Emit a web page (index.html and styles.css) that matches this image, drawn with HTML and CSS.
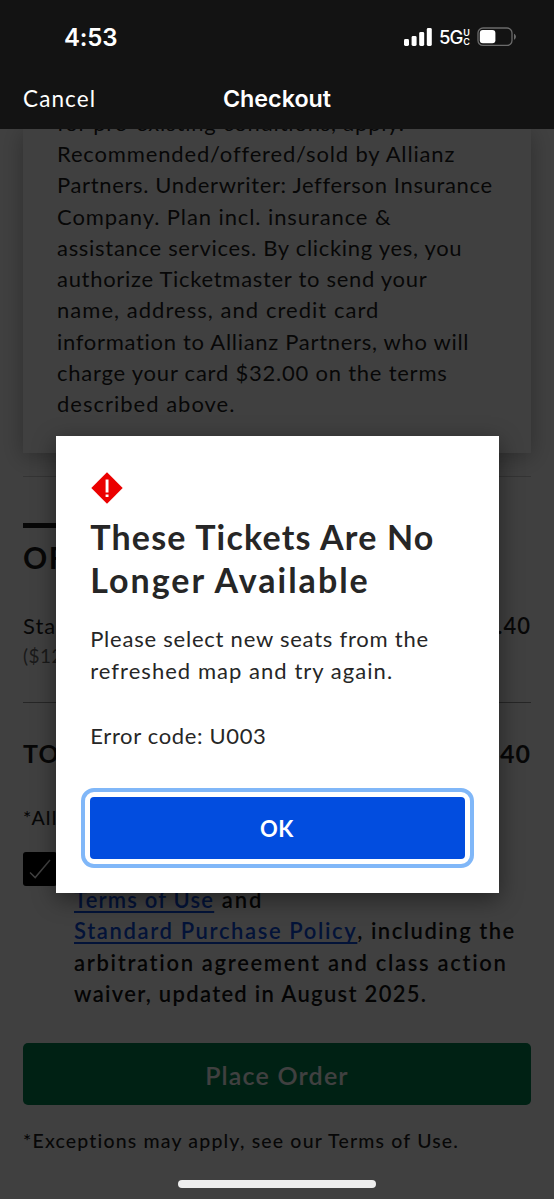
FILE: index.html
```html
<!DOCTYPE html>
<html lang="en">
<head>
<meta charset="utf-8">
<title>Checkout</title>
<link rel="stylesheet" href="styles.css">
</head>
<body>
<div class="screen">
  <header class="top">
    <div class="status">
      <span class="clock">4:53</span>
      <div class="indicators">
        <svg class="signal" width="28" height="18" viewBox="0 0 28 18"><g fill="#fff"><rect x="0" y="11" width="5" height="7" rx="1.4"/><rect x="7.6" y="8" width="5" height="10" rx="1.4"/><rect x="15.2" y="4" width="5" height="14" rx="1.4"/><rect x="22.8" y="0" width="5" height="18" rx="1.4"/></g></svg>
        <span class="net">5G</span>
        <span class="uc"><span>U</span><span>C</span></span>
        <svg class="battery" width="40" height="20" viewBox="0 0 40 20"><rect x="1" y="1" width="34" height="17.4" rx="5" fill="none" stroke="#6b6b6b" stroke-width="1.3"/><rect x="2.8" y="3" width="15.6" height="13.2" rx="3" fill="#fff"/><path d="M37 6.7v6c1.2-.5 1.9-1.6 1.9-3s-.7-2.500-1.900-3z" fill="#6b6b6b"/></svg>
      </div>
    </div>
    <nav class="nav"><span class="cancel">Cancel</span><span class="nav-title">Checkout</span></nav>
  </header>
  <main class="page">
    <section class="insurance">
      <p class="line ls-80">for pre-existing conditions, apply.</p>
      <p class="line ls-84">Recommended/offered/sold by Allianz</p>
      <p class="line ls-65">Partners. Underwriter: Jefferson Insurance</p>
      <p class="line ls-90">Company. Plan incl. insurance &amp;</p>
      <p class="line ls-70">assistance services. By clicking yes, you</p>
      <p class="line ls-70">authorize Ticketmaster to send your</p>
      <p class="line ls-104">name, address, and credit card</p>
      <p class="line ls-70">information to Allianz Partners, who will</p>
      <p class="line ls-77">charge your card $32.00 on the terms</p>
      <p class="line ls-100">described above.</p>
    </section>
    <section class="order">
      <div class="bar"></div>
      <h2 class="order-title">OR</h2>
      <div class="row item"><span>Sta</span><span class="amount">.40</span></div>
      <div class="fee">($12</div>
      <div class="row total"><span>TO</span><span>.40</span></div>
      <div class="note">*All</div>
      <div class="terms">
        <span class="check"><svg width="34" height="34" viewBox="0 0 34 34"><path d="M7 20.500l5.200 5.100L27 8" fill="none" stroke="#fff" stroke-width="1.500"/></svg></span>
        <div class="terms-text">
          <p><a class="ls-120">Terms of Use</a><span class="ls-200"> and</span></p>
          <p><a class="ls-160">Standard Purchase Policy</a><span class="ls-150">, including the</span></p>
          <p class="ls-167">arbitration agreement and class action</p>
          <p class="ls-130">waiver, updated in August 2025.</p>
        </div>
      </div>
      <div class="place">Place Order</div>
      <div class="exceptions">*Exceptions may apply, see our Terms of Use.</div>
    </section>
  </main>
  <div class="overlay">
    <div class="modal" role="dialog">
      <svg class="alert" width="32" height="32" viewBox="0 0 32 32"><path d="M16 .3L31.700 16 16 31.700.3 16z" fill="#eb0000"/><path d="M14.600 7.500h2.900v13h-2.900zM14.600 22.500h2.900v2.600h-2.900z" fill="#fff"/></svg>
      <h1 class="title"><span class="ls-120">These Tickets Are No</span><span class="ls-200">Longer Available</span></h1>
      <p class="message"><span class="ls-77">Please select new seats from the</span><span class="ls-104">refreshed map and try again.</span></p>
      <p class="message code ls-65">Error code: U003</p>
      <button class="ok">OK</button>
    </div>
  </div>
  <div class="home"></div>
</div>
</body>
</html>
```
FILE: styles.css
```css
* { box-sizing: border-box; }
body { margin: 0; font-family: Lato, sans-serif; }
h1, h2, p { margin: 0; font-weight: inherit; }

.screen { position: relative; width: 554px; height: 1199px; overflow: hidden; background: #fff; color: #1f1f1f; }

.top { position: relative; z-index: 3; height: 129px; background: #131313; color: #fff; }
.status { display: flex; justify-content: space-between; align-items: center; height: 74px; padding: 0 37px 0 64px; }
.clock { font: 600 24px Inter, sans-serif; letter-spacing: -0.2px; }
.indicators { display: flex; align-items: center; }
.net { margin-left: 7px; font: 500 18.500px Inter, sans-serif; letter-spacing: -1px; }
.uc { display: flex; flex-direction: column; margin: 0 7px 0 1px; font: 600 9px/9px Inter, sans-serif; }
.nav { display: grid; grid-template-columns: 1fr auto 1fr; align-items: center; height: 49px; padding: 0 23px; }
.cancel { font-size: 22.500px; letter-spacing: 1.100px; }
.nav-title { font: 600 23.300px Inter, sans-serif; }

.page { display: flex; flex-direction: column; height: 1070px; }
.insurance { height: 324px; margin: 0 23px; padding: 0 0 0 34px; box-shadow: 0 4px 22px rgba(0, 0, 0, .3); }
.line { height: 31.300px; font-size: 22px; line-height: 31.300px; white-space: nowrap; }
.insurance .line:first-child { margin-top: -22.300px; }

.order { display: flex; flex-direction: column; margin: 23px 23px 0; border-top: 1px solid #d0d0d0; }
.bar { width: 100px; height: 5px; margin-top: 46px; background: #1f1f1f; }
.order-title { height: 82px; padding-top: 4px; font-size: 30px; font-weight: 700; line-height: 50px; letter-spacing: 1.500px; }
.row { display: flex; justify-content: space-between; font-size: 22px; line-height: 32px; letter-spacing: 1px; }
.amount { font-weight: 600; }
.fee { height: 61px; font-size: 19px; line-height: 28px; letter-spacing: .5px; color: #6a6a6a; border-bottom: 1px solid #999; }
.total { height: 100px; padding-top: 34px; font-size: 25px; font-weight: 700; }
.note { height: 49px; font-size: 19.500px; font-weight: 500; line-height: 29px; letter-spacing: 1.200px; }
.terms { display: flex; gap: 17px; height: 191px; }
.check { width: 34px; height: 34px; border-radius: 3px; background: #000; }
.terms-text { padding-top: 32px; font-size: 22px; font-weight: 600; line-height: 31.300px; white-space: nowrap; color: #131313; }
.terms-text a { color: #0d4ddf; text-decoration: underline; text-decoration-thickness: 2px; text-underline-offset: 3px; }
.place { height: 62px; border-radius: 5px; background: #008450; color: #fff; text-align: center; font-size: 25px; font-weight: 600; line-height: 65px; letter-spacing: 1.200px; }
.exceptions { margin-top: 20px; font-size: 19.500px; font-weight: 500; line-height: 32px; letter-spacing: 1.170px; white-space: nowrap; }

.overlay { position: absolute; inset: 0; z-index: 2; display: flex; padding: 435px 55px 0; background: rgba(0, 0, 0, .75); }
.modal { display: flex; flex-direction: column; width: 443px; height: 457.500px; margin: .5px 0 0 .5px; padding: 36px 34px 34px; background: #fff; color: #262626; box-shadow: 0 6px 22px rgba(0, 0, 0, .45); }
.alert { margin-left: 1px; }
.title { margin-top: 11.500px; padding-left: .7px; font-size: 34px; font-weight: 700; line-height: 43px; }
.title span, .message span { display: block; white-space: nowrap; }
.message { margin-top: 22px; padding-left: .7px; font-size: 22px; line-height: 32px; }
.code { margin-top: 33px; }
.ok { height: 62px; margin-top: 45px; border: 0; border-radius: 4px; background: #024ddf; color: #fff; font: 700 22px Lato, sans-serif; letter-spacing: .5px; outline: 4px solid #80b7f8; outline-offset: 5px; }

.home { position: absolute; z-index: 4; left: 178px; top: 1180px; width: 198px; height: 8px; border-radius: 4px; background: #eee; }

.ls-65 { letter-spacing: .65px; }
.ls-70 { letter-spacing: .7px; }
.ls-77 { letter-spacing: .77px; }
.ls-80 { letter-spacing: .8px; }
.ls-84 { letter-spacing: .84px; }
.ls-90 { letter-spacing: .9px; }
.ls-100 { letter-spacing: 1px; }
.ls-104 { letter-spacing: 1.040px; }
.ls-120 { letter-spacing: 1.200px; }
.ls-130 { letter-spacing: 1.300px; }
.ls-150 { letter-spacing: 1.500px; }
.ls-160 { letter-spacing: 1.620px; }
.ls-167 { letter-spacing: 1.670px; }
.ls-200 { letter-spacing: 2px; }
```
